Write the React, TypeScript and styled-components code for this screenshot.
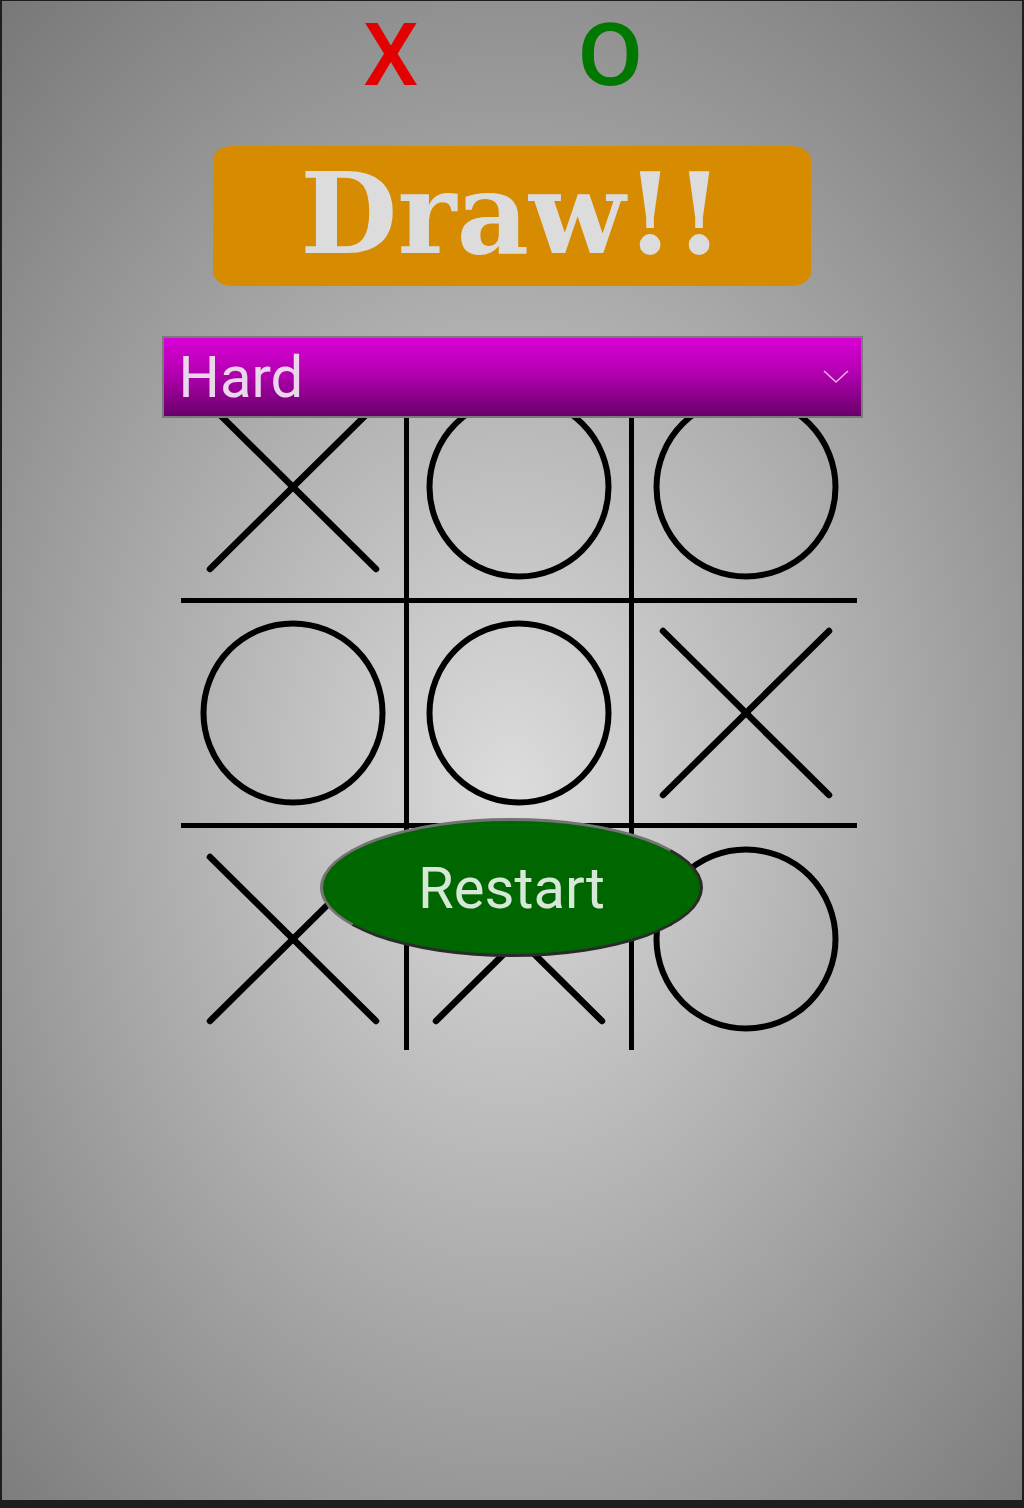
import React from 'react';
import styled, { createGlobalStyle } from 'styled-components';

const Global = createGlobalStyle`
  html, body {
    margin: 0;
    padding: 0;
    background: #1e1e1e;
  }
  body {
    font-family: Roboto, "Liberation Sans", sans-serif;
  }
`;

const Screen = styled.div`
  margin: 1px 2px 0 2px;
  height: 1499px;
  box-sizing: border-box;
  padding-top: 10px;
  display: flex;
  flex-direction: column;
  align-items: center;
  background: radial-gradient(787px 1064px at 50% 52.5%, #dcdcdc 0%, #767676 100%);
`;

const Scores = styled.div`
  display: flex;
  gap: 162px;
  padding-right: 20px;
  font-family: Roboto, "Liberation Sans", sans-serif;
  font-weight: 500;
  font-size: 88px;
  line-height: 1;
`;

const Mark = styled.span<{ $color: string }>`
  color: ${(p) => p.$color};
`;

const ScoreO = styled(Mark)`
  display: inline-block;
  transform: scaleX(1.08);
`;

const Banner = styled.div`
  margin-top: 47px;
  width: 598px;
  height: 140px;
  border-radius: 20px / 14px;
  background: #d78b00;
  display: flex;
  align-items: center;
  justify-content: center;
  font-family: "DejaVu Serif", "Liberation Serif", serif;
  font-weight: bold;
  font-size: 112px;
  line-height: 1;
  color: #dcdcdc;
  padding-bottom: 4px;
  box-sizing: border-box;
`;

const Select = styled.div`
  margin-top: 50px;
  width: 701px;
  height: 82px;
  box-sizing: border-box;
  border: 2px solid #7a7a7a;
  background: linear-gradient(to bottom, #d900d7 0%, #b300b0 45%, #69006a 100%);
  display: flex;
  align-items: center;
  justify-content: space-between;
  padding: 0 12px 0 15px;
  position: relative;
  z-index: 1;
  font-family: Roboto, "Liberation Sans", sans-serif;
  font-size: 58px;
  line-height: 1;
  color: #ecd6ec;
`;

const Board = styled.div`
  margin-top: -43px;
  margin-left: 14px;
  position: relative;
  display: grid;
  grid-template-columns: 228px 225px 223px;
  grid-template-rows: 228px 225px 222px;
`;

const Cell = styled.div<{ $right: boolean; $bottom: boolean }>`
  box-sizing: border-box;
  border-right: ${(p) => (p.$right ? '5px solid #000' : 'none')};
  border-bottom: ${(p) => (p.$bottom ? '5px solid #000' : 'none')};
  display: flex;
  align-items: center;
  justify-content: center;
`;

const RestartButton = styled.button`
  position: absolute;
  left: 139px;
  top: 443px;
  width: 383px;
  height: 139px;
  box-sizing: border-box;
  border-radius: 50%;
  border: 3px solid;
  border-color: #747474 #2a2a2a #2a2a2a #747474;
  background: #006700;
  color: #d6e9d6;
  font-family: Roboto, "Liberation Sans", sans-serif;
  font-size: 58px;
  line-height: 1;
  padding: 0;
  display: flex;
  align-items: center;
  justify-content: center;
  z-index: 2;
`;

const XMark = () => (
  <svg width="190" height="190" viewBox="0 0 190 190">
    <g stroke="#000" strokeWidth="6.5" strokeLinecap="round">
      <line x1="12" y1="13" x2="178" y2="177" />
      <line x1="178" y1="13" x2="12" y2="177" />
    </g>
  </svg>
);

const OMark = () => (
  <svg width="190" height="190" viewBox="0 0 190 190">
    <circle cx="95" cy="95" r="89.5" fill="none" stroke="#000" strokeWidth="6" />
  </svg>
);

const Chevron = () => (
  <svg width="26" height="14" viewBox="0 0 26 14">
    <polyline points="1,1 13,12 25,1" fill="none" stroke="#f2aef2" strokeWidth="1.6" />
  </svg>
);

const board: string[] = ['X', 'O', 'O', 'O', 'O', 'X', 'X', 'X', 'O'];

export default function App() {
  return (
    <>
      <Global />
      <Screen>
        <Scores>
          <Mark $color="#e30000">X</Mark>
          <ScoreO $color="#007800">O</ScoreO>
        </Scores>
        <Banner>Draw!!</Banner>
        <Select role="combobox">
          <span>Hard</span>
          <Chevron />
        </Select>
        <Board>
          {board.map((v, i) => (
            <Cell key={i} $right={i % 3 < 2} $bottom={i < 6}>
              {v === 'X' ? <XMark /> : <OMark />}
            </Cell>
          ))}
          <RestartButton>Restart</RestartButton>
        </Board>
      </Screen>
    </>
  );
}
